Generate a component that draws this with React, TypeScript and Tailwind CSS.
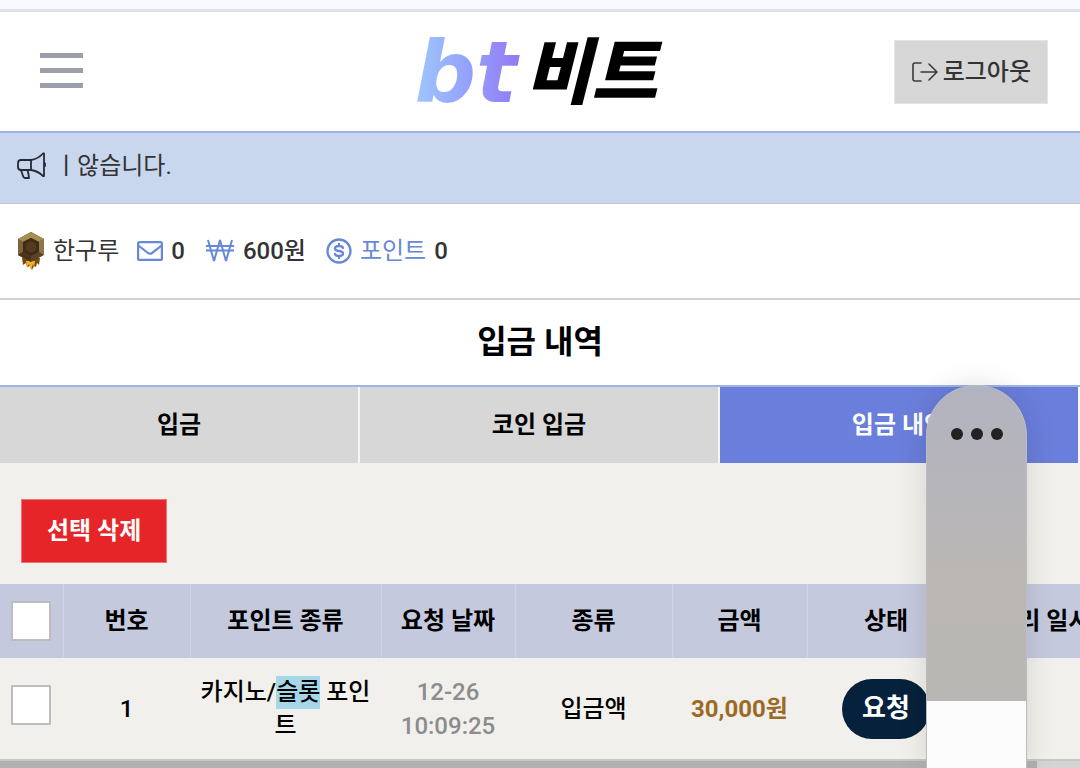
import type { ReactNode } from "react";

const tabs = [
  { name: "입금", active: false },
  { name: "코인 입금", active: false },
  { name: "입금 내역", active: true },
];

const columns = [
  { name: "번호", width: "w-[127px]" },
  { name: "포인트 종류", width: "w-[191px]" },
  { name: "요청 날짜", width: "w-[134px]" },
  { name: "종류", width: "w-[157px]" },
  { name: "금액", width: "w-[135px]" },
  { name: "상태", width: "w-[158px]" },
  { name: "처리 일시", width: "w-[156px]" },
];

function LogoutIcon() {
  return (
    <svg width="28" height="22" viewBox="0 0 28 22" fill="none" stroke="#3a3a3a" strokeWidth="1.6" strokeLinecap="round" strokeLinejoin="round">
      <path d="M10 2H4Q2 2 2 4V18Q2 20 4 20H10" />
      <path d="M10 11H26M18 3L26 11L18 19" />
    </svg>
  );
}

function MegaphoneIcon() {
  return (
    <svg width="30" height="28" viewBox="0 0 30 28" fill="none" stroke="#262b33" strokeWidth="1.8" strokeLinejoin="round" strokeLinecap="round">
      <path d="M14 8H4Q1 8 1 11V15Q1 18 4 18H14Z" />
      <path d="M14 8Q21 7 26 1.5H27V24H26Q21 19 14 18" />
      <path d="M4 18L6 24Q6.500 26 8 26H12L11.500 22Q11 21 10.500 18" />
      <path d="M28 11.500V14" />
    </svg>
  );
}

function MedalIcon() {
  return (
    <svg width="28" height="40" viewBox="0 0 28 40">
      <path d="M5 27L6 34L9 32L10 36L13 35L15 39L17 35L19 36L20 32L22 34L23 27Z" fill="#7b4a12" />
      <path d="M9 30L10 36L12 33L14 39L16 33L17 36L18 30Z" fill="#f5b324" />
      <path d="M14 1L27 8V24L14 31L1 24V8Z" fill="#5b4423" />
      <path d="M14 1L27 8L22 11L14 7L6 11L1 8Z" fill="#a88d50" />
      <path d="M1 8L6 11V21L1 24Z" fill="#7c6436" />
      <path d="M27 8L22 11V21L27 24Z" fill="#8d7545" />
      <path d="M14 7L22 11V21L14 25L6 21V11Z" fill="#3e2b19" />
      <path d="M14 10L19 13V19L14 22L9 19V13Z" fill="#563a20" />
      <path d="M1 24L6 21L14 25V31Z" fill="#493519" />
    </svg>
  );
}

function MailIcon() {
  return (
    <svg width="26" height="20" viewBox="0 0 26 20" fill="none" stroke="#6788d8" strokeWidth="2.2" strokeLinejoin="round" strokeLinecap="round">
      <rect x="1.100" y="1.100" width="23.800" height="17.800" rx="1.500" />
      <path d="M2 5L11 12Q13 13.500 15 12L24 5" />
    </svg>
  );
}

function WonIcon() {
  return (
    <svg width="30" height="24" viewBox="0 0 30 24" fill="none" stroke="#6788d8" strokeWidth="2" strokeLinejoin="bevel">
      <path d="M3 1L9 22L15 1L21 22L27 1" />
      <path d="M1 7H29M1 11.500H29" />
    </svg>
  );
}

function PointIcon() {
  return (
    <svg width="26" height="26" viewBox="0 0 26 26" fill="none" stroke="#6788d8" strokeWidth="2.3" strokeLinecap="round">
      <circle cx="13" cy="13" r="11.500" />
      <path d="M17 10Q16.500 8 13 8Q9 8 9 10.500Q9 12.500 13 13Q17 13.500 17 15.500Q17 18 13 18Q9.500 18 9 16M13 6V8M13 18V20" />
    </svg>
  );
}

function Check({ label }: { label: string }) {
  return (
    <input
      type="checkbox"
      aria-label={label}
      className="block size-10 appearance-none border-2 border-[#bdbdbd] bg-white checked:bg-[#6b7fdc]"
    />
  );
}

function Cell({ children, className = "" }: { children?: ReactNode; className?: string }) {
  return <td className={`px-2 ${className}`}>{children}</td>;
}

export default function App() {
  return (
    <div className="relative min-h-screen overflow-hidden bg-[#f1f0ec] font-[Roboto,'Noto_Sans_CJK_KR',sans-serif] text-2xl text-black">
      <div className="h-3 border-b-3 border-[#e1e1ec] bg-[#f8f8ff]" />

      {/* header */}
      <header className="grid h-[119px] grid-cols-[1fr_auto_1fr] items-center bg-white pr-8 pl-10">
        <button aria-label="메뉴" className="mb-[3px] flex w-[43px] flex-col gap-[10px]">
          <span className="h-[5px] w-full bg-[#9b9faa]" />
          <span className="h-[5px] w-full bg-[#9b9faa]" />
          <span className="h-[5px] w-full bg-[#9b9faa]" />
        </button>
        <a href="#" className="flex items-center pr-4 leading-none whitespace-nowrap italic">
          <span className="bg-linear-to-r from-[#9fc8fb] via-[#94a0fb] to-[#9274f3] bg-clip-text pr-2 font-['DejaVu_Sans'] text-[86px] font-bold text-transparent">bt</span>
          <span className="pt-1 text-[72px] font-black">비트</span>
        </a>
        <button className="flex h-16 items-center gap-1 justify-self-end border border-[#e4e4e4] bg-[#d7d7d7] px-4 font-medium text-[#333]">
          <LogoutIcon />
          로그아웃
        </button>
      </header>

      {/* notice */}
      <div className="flex h-[73px] items-center gap-2 border-t-2 border-b border-t-[#9db4e8] border-b-[#c9c9cc] bg-[#c8d7ed] px-[17px] pb-1 text-[#333]">
        <MegaphoneIcon />
        <span>ㅣ않습니다.</span>
      </div>

      {/* user info */}
      <div className="flex h-24 items-center border-b-2 border-[#d2d2d2] bg-white px-[17px] text-[#333]">
        <MedalIcon />
        <span className="ml-2">한구루</span>
        <span className="ml-[18px] flex items-center gap-2 font-medium">
          <MailIcon />0
        </span>
        <span className="ml-5 flex items-center gap-2 font-medium">
          <WonIcon />
          600원
        </span>
        <span className="ml-5 flex items-center gap-2">
          <PointIcon />
          <span className="text-[#6788d8]">포인트</span>
          <span className="font-medium">0</span>
        </span>
      </div>

      <h1 className="flex h-[85px] items-center justify-center bg-white text-[32px] font-bold">입금 내역</h1>

      {/* tabs */}
      <nav className="grid grid-cols-3 border-t-2 border-[#9db4e8]">
        {tabs.map((tab) => (
          <button
            key={tab.name}
            className={`h-19 border-r-2 border-[#f6f6f3] font-bold ${tab.active ? "bg-[#6a7edb] text-white" : "bg-[#d7d7d7]"}`}
          >
            {tab.name}
          </button>
        ))}
      </nav>

      <div className="px-[21px] pt-9 pb-[21px]">
        <button className="h-16 border border-[#ee7474] bg-[#e52527] px-[25px] font-bold text-white">선택 삭제</button>
      </div>

      {/* history */}
      <div className="overflow-hidden">
        <table className="w-full min-w-[1121px] table-fixed text-center">
          <thead>
            <tr className="h-[74px] bg-[#c4c9dd]">
              <th className="w-[63px] pl-[11px]">
                <Check label="전체 선택" />
              </th>
              {columns.map((column) => (
                <th key={column.name} className={`border-l border-[#ced4e6] font-bold whitespace-nowrap ${column.width}`}>
                  {column.name}
                </th>
              ))}
            </tr>
          </thead>
          <tbody>
            <tr className="h-[102px] border-b-2 border-[#c8c7c2] font-medium">
              <Cell className="pr-0 pb-2 pl-[11px]">
                <Check label="1번 선택" />
              </Cell>
              <Cell>1</Cell>
              <Cell className="leading-[33px] break-all">
                카지노/<mark className="inline-block bg-[#a5d7e8] text-black">슬롯</mark> 포인트
              </Cell>
              <Cell className="leading-[34px] text-[#8c8c8c]">
                12-26
                <br />
                10:09:25
              </Cell>
              <Cell>입금액</Cell>
              <Cell className="font-bold text-[#9b6b25]">30,000원</Cell>
              <Cell>
                <span className="inline-flex h-15 items-center rounded-full bg-[#06213b] px-5 text-[26px] font-bold text-white">요청</span>
              </Cell>
              <Cell />
            </tr>
          </tbody>
        </table>
        <div className="h-2 bg-[#d4d4d4]">
          <div className="h-full w-[96%] bg-[#b1b1b1]" />
        </div>
      </div>

      {/* floating handle */}
      <div className="absolute top-[385px] right-[53px] bottom-0 flex w-[101px] flex-col rounded-t-full border border-b-0 border-[#bcbcc0] bg-linear-to-b from-[#b2b3c0] via-[#bab7b4] via-50% to-[#b8b7b3] shadow-[0_0_30px_rgba(0,0,0,0.12)]">
        <button aria-label="더보기" className="flex h-24 items-center justify-center gap-2">
          <span className="size-3 rounded-full bg-[#222]" />
          <span className="size-3 rounded-full bg-[#222]" />
          <span className="size-3 rounded-full bg-[#222]" />
        </button>
        <div className="mt-auto h-[68px] bg-[#fcfcfc]" />
      </div>
    </div>
  );
}
